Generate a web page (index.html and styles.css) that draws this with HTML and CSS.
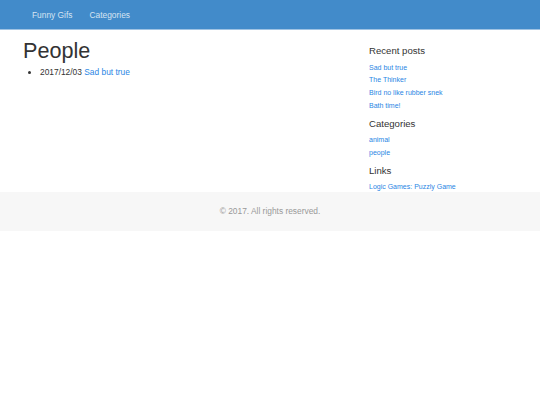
FILE: index.html
```html
<!DOCTYPE html>
<html lang="en">
<head>
<meta charset="utf-8">
<title>People - Funny Gifs</title>
<link rel="stylesheet" href="styles.css">
</head>
<body>
<nav class="navbar">
  <a class="nav-link" href="#">Funny Gifs</a>
  <a class="nav-link" href="#">Categories</a>
</nav>
<div class="container">
  <main class="content">
    <h1 class="title">People</h1>
    <ul class="post-list">
      <li>2017/12/03 <a href="#">Sad but true</a></li>
    </ul>
  </main>
  <aside class="sidebar">
    <h4 class="side-title">Recent posts</h4>
    <ul class="side-list">
      <li><a href="#">Sad but true</a></li>
      <li><a href="#">The Thinker</a></li>
      <li><a href="#">Bird no like rubber snek</a></li>
      <li><a href="#">Bath time!</a></li>
    </ul>
    <h4 class="side-title">Categories</h4>
    <ul class="side-list">
      <li><a href="#">animal</a></li>
      <li><a href="#">people</a></li>
    </ul>
    <h4 class="side-title">Links</h4>
    <ul class="side-list side-list-last">
      <li><a href="#">Logic Games: Puzzly Game</a></li>
    </ul>
  </aside>
</div>
<footer class="footer">© 2017. All rights reserved.</footer>
</body>
</html>
```

FILE: styles.css
```css
html, body {
  margin: 0;
  padding: 0;
  background: #fff;
}
body {
  font-family: "Liberation Sans", Arial, Helvetica, sans-serif;
  font-size: 8.4px;
  line-height: 1.43;
  color: #333;
}
a {
  color: #2a86e4;
  text-decoration: none;
}
.navbar {
  display: flex;
  align-items: center;
  gap: 17px;
  height: 29px;
  padding: 0 32px;
  background: #428bca;
  border-bottom: 1px solid #9fc3e3;
}
.nav-link {
  color: #d6e4f2;
  font-size: 8.4px;
  position: relative;
  top: 1px;
}
.container {
  display: grid;
  grid-template-columns: 1fr 148px;
  padding: 0 23px;
}
.title {
  font-size: 21.6px;
  font-weight: 500;
  line-height: 1.1;
  margin: 9px 0 3px;
}
.post-list {
  margin: 0;
  padding-left: 17px;
}
.sidebar {
  padding-top: 16px;
}
.side-title {
  font-size: 9.6px;
  font-weight: 500;
  line-height: 1.1;
  color: #333;
  margin: 0 0 5px;
}
.side-list {
  list-style: none;
  margin: 0 0 6.5px;
  padding: 0;
}
.side-list li {
  font-size: 7px;
  line-height: 12.7px;
}
.side-list-last {
  margin-bottom: 0;
}
.side-list-last li {
  line-height: 10px;
}
.footer {
  background: #f7f7f7;
  color: #999;
  text-align: center;
  height: 39px;
  line-height: 39px;
}
```
